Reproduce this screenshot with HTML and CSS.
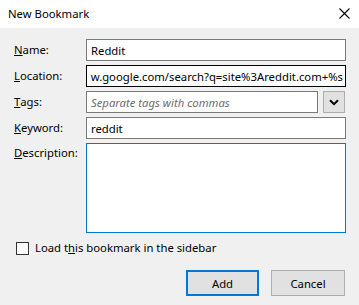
FILE: index.html
```html
<!DOCTYPE html>
<html>
<head>
<meta charset="utf-8">
<link rel="stylesheet" href="styles.css">
</head>
<body>
<div class="window">
  <div class="titlebar">
    <span class="title">New Bookmark</span>
    <svg class="close" width="11" height="11" viewBox="0 0 11 11"><path d="M0.5 0.5 L10.5 10.5 M10.5 0.5 L0.5 10.5" stroke="#000" stroke-width="1.1" fill="none"/></svg>
  </div>
  <div class="body">
    <div class="form">
      <label class="lbl"><u>N</u>ame:</label>
      <div class="field"><span class="val">Reddit</span></div>

      <label class="lbl"><u>L</u>ocation:</label>
      <div class="field focus-dark scroll"><span class="val">w.google.com/search?q=site%3Areddit.com+%s</span></div>

      <label class="lbl"><u>T</u>ags:</label>
      <div class="tagrow">
        <div class="field grow"><span class="ph">Separate tags with commas</span></div>
        <div class="dd"><svg width="10" height="7" viewBox="0 0 10 7"><path d="M1 1.2 L5 5.2 L9 1.2" stroke="#000" stroke-width="2" fill="none"/></svg></div>
      </div>

      <label class="lbl"><u>K</u>eyword:</label>
      <div class="field"><span class="val">reddit</span></div>

      <label class="lbl top"><u>D</u>escription:</label>
      <div class="field area"></div>
    </div>
    <div class="checkrow">
      <span class="box"></span>
      <span class="cklabel">Load t<u>h</u>is bookmark in the sidebar</span>
    </div>
    <div class="buttons">
      <div class="btn primary">Add</div>
      <div class="btn">Cancel</div>
    </div>
  </div>
</div>
</body>
</html>
```
FILE: styles.css
```css
html, body {
  margin: 0;
  padding: 0;
}
body {
  font-family: "Segoe UI", "Noto Sans", "Open Sans", sans-serif;
  font-size: 11.3px;
  color: #000;
  background: #f0f0f0;
  width: 359px;
  height: 305px;
  overflow: hidden;
}
.window {
  display: flex;
  flex-direction: column;
  height: 305px;
}
.titlebar {
  height: 28px;
  background: #fff;
  display: flex;
  align-items: center;
  justify-content: space-between;
  padding: 0 9px 0 8px;
  box-sizing: border-box;
}
.title {
  color: #000;
  margin-top: -1px;
}
.close {
  margin-top: -2px;
}
.body {
  flex: 1;
  background: #f0f0f0;
  padding: 11px 13px 0 14px;
  display: flex;
  flex-direction: column;
}
.form {
  display: grid;
  grid-template-columns: 72px 1fr;
  grid-template-rows: repeat(4, 22px) 90px;
  row-gap: 4px;
}
.lbl {
  display: flex;
  align-items: center;
  line-height: 1;
}
.lbl.top {
  align-items: flex-start;
  padding-top: 4px;
}
.field {
  box-sizing: border-box;
  height: 22px;
  border: 1px solid #7a7a7a;
  background: #fff;
  display: flex;
  align-items: center;
  padding: 0 4px;
  overflow: hidden;
  white-space: nowrap;
}
.focus-dark {
  border-color: #000;
}
.scroll {
  justify-content: flex-end;
  padding-right: 2px;
}
.val {
  flex: none;
}
.ph {
  color: #6d6d6d;
  font-style: italic;
}
.tagrow {
  display: flex;
  gap: 5px;
}
.grow {
  flex: 1;
}
.dd {
  width: 22px;
  height: 22px;
  box-sizing: border-box;
  border: 1px solid #adadad;
  background: #e1e1e1;
  display: flex;
  align-items: center;
  justify-content: center;
  margin-right: 1px;
}
.form > .area {
  height: 90px;
  border-color: #0078d7;
}
.checkrow {
  display: flex;
  align-items: center;
  margin-top: 8px;
  padding-left: 2px;
  height: 14px;
}
.box {
  width: 13px;
  height: 13px;
  box-sizing: border-box;
  border: 1px solid #333;
  background: #fff;
  margin-right: 6px;
}
.cklabel {
  line-height: 1;
}
.buttons {
  display: flex;
  justify-content: flex-end;
  gap: 12px;
  margin-top: 15px;
  padding-right: 1px;
}
.btn {
  box-sizing: border-box;
  width: 74px;
  height: 26px;
  border: 1px solid #adadad;
  background: #e1e1e1;
  display: flex;
  align-items: center;
  justify-content: center;
}
.btn.primary {
  border: 2px solid #0078d7;
  width: 73px;
}
```
